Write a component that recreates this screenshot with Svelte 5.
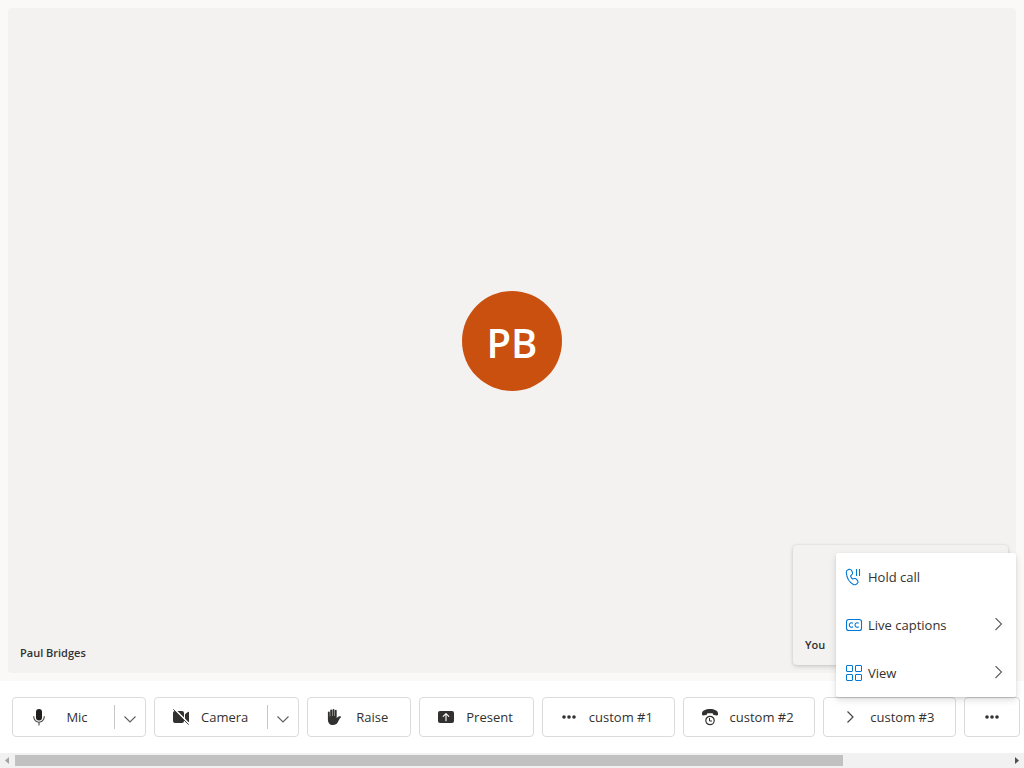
<script>
  const customs = [
    { label: 'custom #1', icon: 'more' },
    { label: 'custom #2', icon: 'callclock' },
    { label: 'custom #3', icon: 'chevron' }
  ];
  const menu = [
    { label: 'Hold call', icon: 'hold', sub: false },
    { label: 'Live captions', icon: 'cc', sub: true },
    { label: 'View', icon: 'view', sub: true }
  ];
</script>

{#snippet icon(name)}
  <svg class="icon" viewBox="0 0 20 20" width="20" height="20" aria-hidden="true">
    {#if name === 'mic'}
      <rect x="7" y="2" width="6" height="11.5" rx="3" fill="#201f1e" />
      <path d="M4.8 9.5v.5a5.2 5.2 0 0 0 10.4 0v-.5M10 15.2V18" fill="none" stroke="#484644" stroke-width="1.1" stroke-linecap="round" />
    {:else if name === 'cameraoff'}
      <path d="M4 4h7a2 2 0 0 1 2 2v8a2 2 0 0 1-2 2H4a2 2 0 0 1-2-2V6a2 2 0 0 1 2-2zM14 7.2l3.2-2.4c.4-.3.8 0 .8.4v9.6c0 .4-.4.7-.8.4L14 12.8z" />
      <path d="M3.2 1.8 18.4 17" stroke="#fff" stroke-width="1.6" />
      <path d="M2.3 2.3 17.7 17.7" stroke="#484644" stroke-width="1" />
    {:else if name === 'hand'}
      <path d="M3.9 5.4a.95.95 0 0 1 1.9 0V9.5h.4V3.5a.95.95 0 0 1 1.900 0v5.500h.4V2.900a.95.95 0 0 1 1.900 0v6.100h.4V3.800a.95.95 0 0 1 1.900 0V11.200c.9-1.500 2-2.200 3.600-2 .8.1.9.8.4 1.300-1.400 1.400-2 3.200-2.900 4.800-.9 1.800-2.500 2.700-4.800 2.700-3.300 0-5.100-2-5.100-5.500z" />
    {:else if name === 'present'}
      <rect x="2" y="4" width="16" height="12" rx="2" />
      <path d="M10 13.8V6.8M7.2 9.4 10 6.6l2.8 2.8" fill="none" stroke="#fff" stroke-width="1.1" stroke-linecap="round" stroke-linejoin="round" />
    {:else if name === 'more'}
      <circle cx="5" cy="10" r="1.8" /><circle cx="10" cy="10" r="1.8" /><circle cx="15" cy="10" r="1.8" />
    {:else if name === 'callclock'}
      <path d="M2 6.4C2 3.700 5.700 2 10 2s8 1.700 8 4.400v.8c0 .8-.6 1.300-1.300 1.200l-2.600-.3c-.7-.1-1.100-.6-1.200-1.200L12.700 6.300H7.300L7.100 6.900c-.1.6-.5 1.100-1.200 1.200l-2.600.3C2.600 8.500 2 8 2 7.200z" />
      <circle cx="10" cy="13.500" r="4.200" fill="#fff" stroke="#323130" stroke-width="1.200" />
      <path d="M9.500 11v3H12" fill="none" stroke="#323130" />
    {:else if name === 'chevron'}
      <path d="M7.500 4.500 13 10 7.500 15.500" fill="none" stroke="#484644" stroke-width="1.200" />
    {:else if name === 'hold'}
      <g fill="none" stroke="#0078d4" stroke-width="1.100" stroke-linejoin="round">
        <path d="M4 2.700l1.100-.3c1.100-.3 2 .2 2.500 1.200l.8 1.700c.4.900.2 1.700-.5 2.300L6.600 8.800c.2 1.200.9 2.300 2 3.200l1.800-.5c.9-.2 1.600 0 2.200.8l1.100 1.500c.5.800.5 1.700-.2 2.400l-.7.700c-.9.900-2.200 1.100-3.400.5C5.600 15.500 2.800 11.300 2.300 5.500 2.200 4.200 2.800 3.100 4 2.700z" />
        <path d="M12.500 2v7M15.500 2v7" />
      </g>
    {:else if name === 'cc'}
      <g fill="none" stroke="#0078d4" stroke-width="1.100">
        <rect x="2.500" y="4.500" width="15" height="11" rx="2.300" />
        <path d="M9 8.300C7.300 7 5.300 8.100 5.300 10s2 3 3.700 1.700M14.700 8.300C13 7 11 8.100 11 10s2 3 3.700 1.700" />
      </g>
    {:else if name === 'view'}
      <g fill="none" stroke="#0078d4">
        <rect x="2.500" y="2.500" width="6" height="6" rx=".5" /><rect x="11.500" y="2.500" width="6" height="6" rx=".5" />
        <rect x="2.500" y="11.500" width="6" height="6" rx=".5" /><rect x="11.500" y="11.500" width="6" height="6" rx=".5" />
      </g>
    {/if}
  </svg>
{/snippet}

{#snippet down()}
  <svg viewBox="0 0 12 12" width="12" height="12" aria-hidden="true"><path d="M.5 3.500 6 9l5.500-5.500" fill="none" stroke="#605e5c" stroke-width="1.100" /></svg>
{/snippet}

<div class="call">
  <main class="stage">
    <section class="remote">
      <div class="avatar">PB</div>
      <span class="name">Paul Bridges</span>
      <div class="local"><span>You</span></div>
    </section>
  </main>

  <div class="bar">
    <div class="split">
      <button class="main">{@render icon('mic')}<span class="label">Mic</span></button>
      <button class="drop" aria-label="Microphone options">{@render down()}</button>
    </div>
    <div class="split">
      <button class="main">{@render icon('cameraoff')}<span class="label">Camera</span></button>
      <button class="drop" aria-label="Camera options">{@render down()}</button>
    </div>
    <button class="control">{@render icon('hand')}<span class="label">Raise</span></button>
    <button class="control">{@render icon('present')}<span class="label">Present</span></button>
    {#each customs as c}
      <button class="control custom">{@render icon(c.icon)}<span class="label">{c.label}</span></button>
    {/each}
    <button class="control more" aria-label="More options">{@render icon('more')}</button>
  </div>

  <div class="scroll">
    <button aria-label="Scroll left"><svg viewBox="0 0 15 15" width="15" height="15"><path d="M9 4v7L5 7.500z" fill="#a3a3a3" /></svg></button>
    <div class="track"><div class="thumb"></div></div>
    <button aria-label="Scroll right"><svg viewBox="0 0 15 15" width="15" height="15"><path d="M6 4v7l4-3.500z" fill="#505050" /></svg></button>
  </div>

  <div class="menu" role="menu">
    {#each menu as m}
      <button role="menuitem">
        {@render icon(m.icon)}
        <span class="text">{m.label}</span>
        {#if m.sub}
          <svg viewBox="0 0 12 14" width="12" height="14" aria-hidden="true"><path d="M3.500 0l6 6-6 6" fill="none" stroke="#605e5c" stroke-width="1.100" /></svg>
        {/if}
      </button>
    {/each}
  </div>
</div>

<style>
  :global(body) { margin: 0; }
  .call, .call * { box-sizing: border-box; }
  .call {
    position: relative;
    display: flex;
    flex-direction: column;
    height: 100vh;
    overflow: hidden;
    background: #fff;
    color: #323130;
    font-family: "Open Sans", "Noto Sans", sans-serif;
    font-size: 13px;
    line-height: 20px;
  }
  button {
    margin: 0;
    padding: 0;
    border: 0;
    background: none;
    color: inherit;
    font: inherit;
  }
  svg { display: block; flex: none; }
  .icon { fill: #323130; }
  .stage {
    flex: 1;
    display: flex;
    min-height: 0;
    padding: 8px;
    background: #faf9f8;
  }
  .remote {
    position: relative;
    flex: 1;
    display: flex;
    align-items: center;
    justify-content: center;
    border-radius: 4px;
    background: #f3f2f1;
    font-size: 11px;
    font-weight: 600;
  }
  .avatar {
    display: flex;
    align-items: center;
    justify-content: center;
    width: 100px;
    height: 100px;
    padding-top: 4px;
    border-radius: 50%;
    background: #ca5010;
    color: #fff;
    font-size: 40px;
    line-height: 56px;
  }
  .name { position: absolute; left: 12px; bottom: 10px; }
  .local {
    position: absolute;
    right: 8px;
    bottom: 8px;
    display: flex;
    align-items: flex-end;
    width: 215px;
    height: 120px;
    padding: 10px 12px;
    border-radius: 4px;
    background: #f3f2f1;
    box-shadow: 0 2px 4px rgba(0, 0, 0, 0.13), 0 0 3px rgba(0, 0, 0, 0.11);
  }
  .bar {
    display: flex;
    gap: 8px;
    padding: 16px 4px 16px 12px;
  }
  .split, .control {
    display: flex;
    flex: none;
    align-items: center;
    height: 40px;
    border: 1px solid #dddbd9;
    border-radius: 4px;
    background: #fff;
  }
  .control, .main {
    gap: 10px;
    padding: 0 20px 0 16px;
  }
  .main { display: flex; align-items: center; height: 38px; padding-right: 19px; }
  .control.custom { flex: 1 0 auto; }
  .label { min-width: 36px; text-align: center; white-space: nowrap; }
  .drop {
    display: flex;
    align-items: center;
    justify-content: center;
    width: 31px;
    height: 24px;
    padding-top: 4px;
    border-left: 1px solid #c8c6c4;
  }
  .more { padding: 0 17px; }
  .scroll { display: flex; height: 15px; background: #f1f1f1; }
  .track { flex: 1; padding: 2px 0; }
  .thumb { width: 83.3%; height: 11px; background: #c1c1c1; }
  .menu {
    position: absolute;
    right: 8px;
    bottom: 71px;
    width: 180px;
    border-radius: 2px;
    background: #fff;
    box-shadow: 0 3px 7px rgba(0, 0, 0, 0.13), 0 1px 2px rgba(0, 0, 0, 0.11);
  }
  .menu button {
    display: flex;
    align-items: center;
    gap: 4px;
    width: 100%;
    height: 48px;
    padding: 0 12px 0 8px;
    text-align: left;
  }
  .text { flex: 1; }
</style>
